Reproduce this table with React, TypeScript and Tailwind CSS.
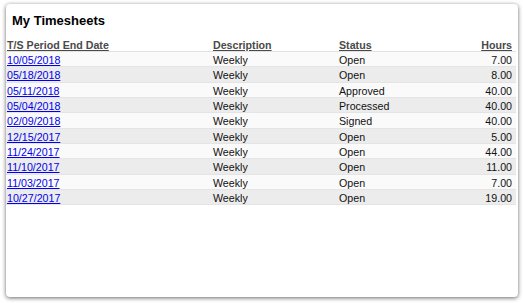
import React from "react";

const rows = [
  ["10/05/2018", "Weekly", "Open", "7.00"],
  ["05/18/2018", "Weekly", "Open", "8.00"],
  ["05/11/2018", "Weekly", "Approved", "40.00"],
  ["05/04/2018", "Weekly", "Processed", "40.00"],
  ["02/09/2018", "Weekly", "Signed", "40.00"],
  ["12/15/2017", "Weekly", "Open", "5.00"],
  ["11/24/2017", "Weekly", "Open", "44.00"],
  ["11/10/2017", "Weekly", "Open", "11.00"],
  ["11/03/2017", "Weekly", "Open", "7.00"],
  ["10/27/2017", "Weekly", "Open", "19.00"],
];

export default function App() {
  return (
    <div className="w-[523px] h-[303px] bg-white p-[4px_5px_6px_6px]" style={{ fontFamily: '"Liberation Sans", Arial, sans-serif' }}>
      <div className="h-full w-full bg-white rounded-[4px] shadow-[0_1px_4px_rgba(0,0,0,0.6)] flex flex-col pr-[2px]">
        <div className="pl-[6px] pt-[9px] h-[33px] text-[13px] leading-[15px] font-bold text-black">My Timesheets</div>
        <div className="grid grid-cols-[207px_126px_1fr_auto] h-[15px] items-center border-b border-[#e2e2e2] text-[10.67px] font-bold text-[#4a4a4a] underline">
          <div className="pl-[1px]">T/S Period End Date</div>
          <div>Description</div>
          <div>Status</div>
          <div className="text-right pr-[4px]">Hours</div>
        </div>
        {rows.map((r, i) => (
          <div
            key={i}
            className={`grid grid-cols-[207px_126px_1fr_auto] h-[15.33px] items-center border-b border-[#e4e4e4] text-[10.67px] text-[#111] ${i % 2 === 0 ? "bg-[#fafafa]" : "bg-[#ececec]"}`}
          >
            <div className="pl-[1px]"><a className="text-[#0000ee] underline" href="#">{r[0]}</a></div>
            <div>{r[1]}</div>
            <div>{r[2]}</div>
            <div className="text-right pr-[4px]">{r[3]}</div>
          </div>
        ))}
      </div>
    </div>
  );
}
